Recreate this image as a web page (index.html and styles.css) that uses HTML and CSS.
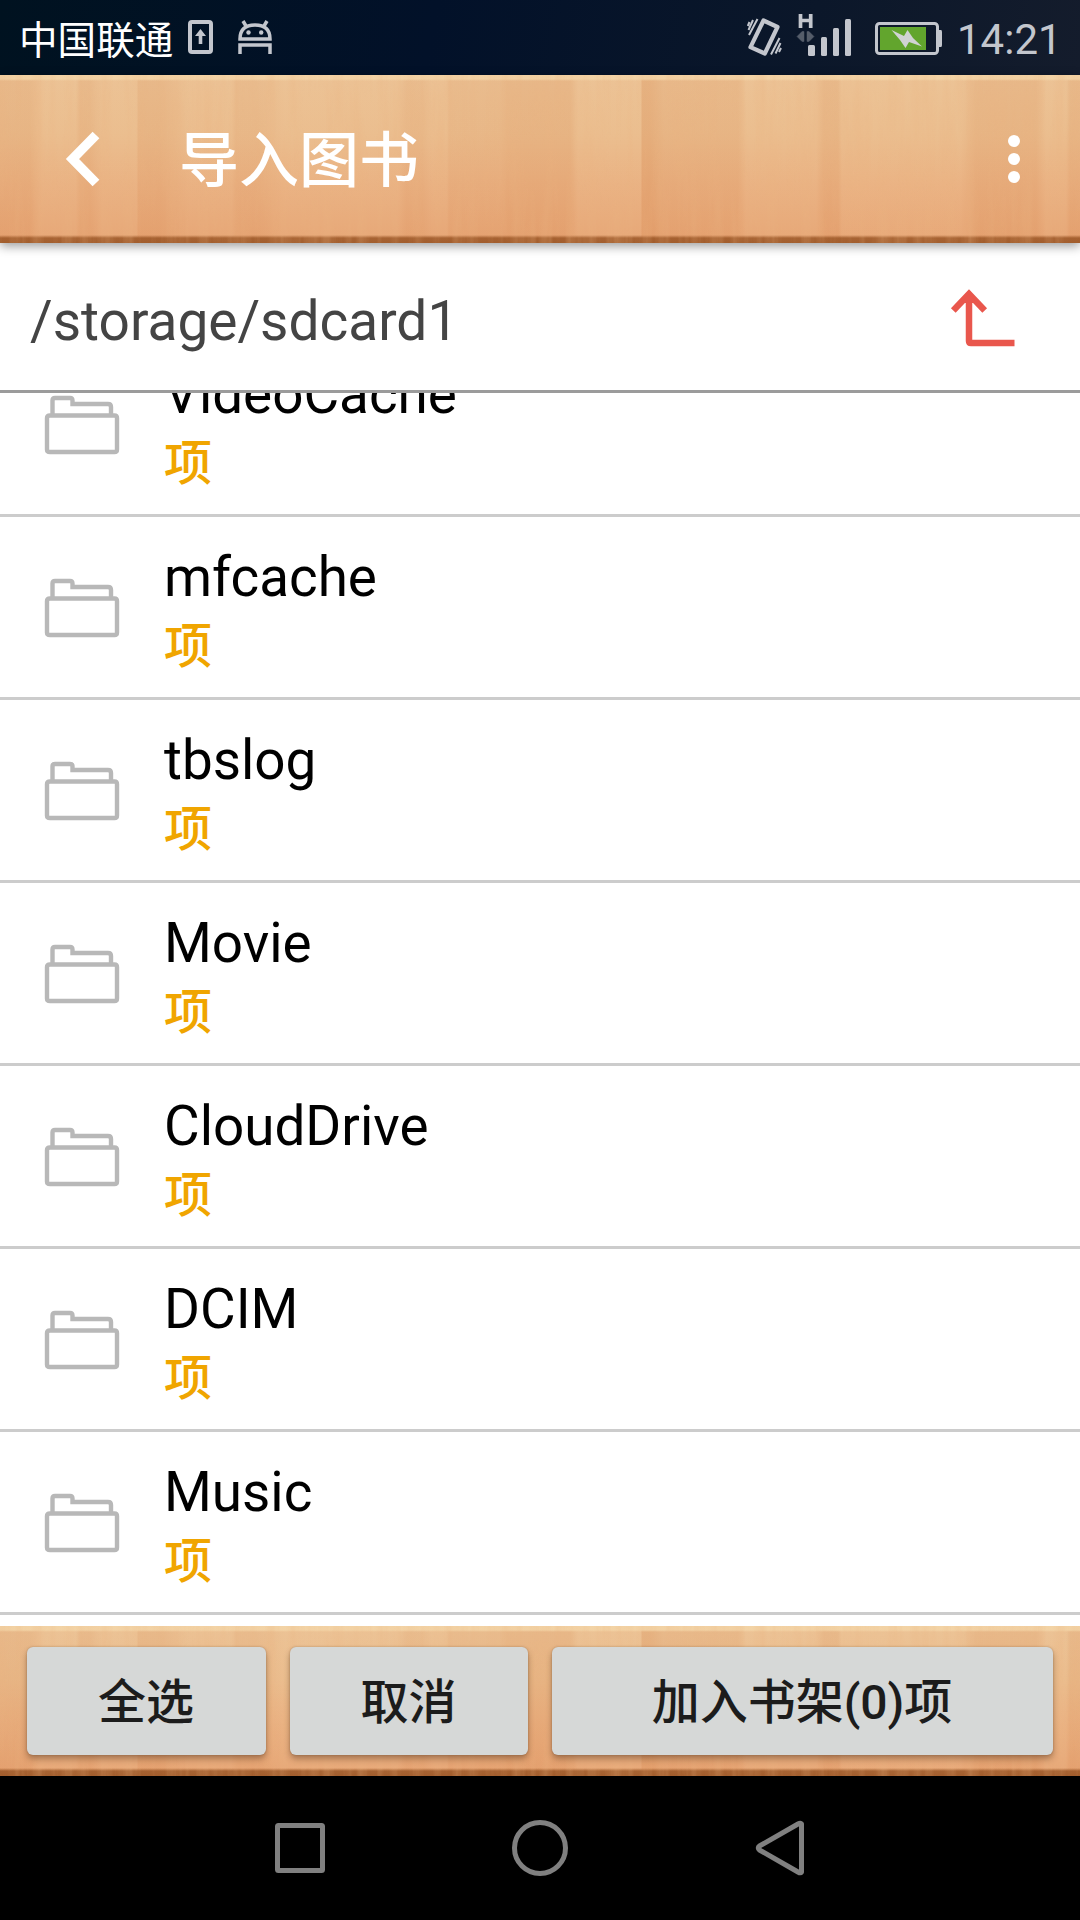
FILE: index.html
```html
<!DOCTYPE html>
<html lang="zh-CN">
<head>
<meta charset="utf-8">
<title>导入图书</title>
<link rel="stylesheet" href="styles.css">
</head>
<body>
<svg class="defs" width="0" height="0" aria-hidden="true">
  <filter id="grain" x="0" y="0" width="100%" height="100%">
    <feTurbulence type="fractalNoise" baseFrequency="0.09 0.008" numOctaves="4" seed="4"/>
    <feColorMatrix values="0 0 0 0 .82  0 0 0 0 .45  0 0 0 0 .22  1.3 0 0 0 -.48"/>
  </filter>
  <symbol id="folder" viewBox="0 0 76 60">
    <path d="M8.500 19V5.500Q8.500 3 11 3H26Q28.500 3 28.500 5.500V9H64Q67 9 67 12V19M6 20.500H70.500Q73 20.500 73 23V54.500Q73 57 70.500 57H6Q3 57 3 54.500V23Q3 20.500 6 20.500Z" fill="none" stroke="#b8b8b8" stroke-width="4.400"/>
  </symbol>
</svg>
<div class="screen">
  <div class="status">
    <span class="carrier">中国联通</span>
    <svg class="status-left" width="84" height="34" viewBox="188 20 84 34" fill="none" stroke="#c3c6cd" stroke-width="4">
      <rect x="190" y="22" width="21" height="30" rx="2"/>
      <path d="M200.500 29L206 36H202.300V44H198.700V36H195Z" fill="#c3c6cd" stroke="none"/>
      <path d="M240 39Q240 25 255 25Q270 25 270 39ZM246 26L243 21M264 26L267 21M240 54V45H270V54" stroke-width="3.500"/>
      <circle cx="248.500" cy="32.500" r="2.200" fill="#c3c6cd" stroke="none"/>
      <circle cx="261.200" cy="32.500" r="2.200" fill="#c3c6cd" stroke="none"/>
    </svg>
    <svg class="status-right" width="197" height="50" viewBox="746 10 197 50" fill="none" stroke="#c3c6cd">
      <path d="M763.500 20.500L777.500 27L764.800 53.500L750.500 47.200Z" stroke-width="4.200" stroke-linejoin="round"/>
      <path d="M757.500 19L749 35M753 20L748.500 30M749.500 22L747.800 26M779.500 38L771 54.500M780.500 43L775.500 53.500M781 48L779 52" stroke-width="2"/>
      <path d="M800.500 14V28M810.700 14V28M800 20.500H811" stroke-width="3.700"/>
      <path d="M797 36.500L802 31.500H804V41.500H802ZM814 36.500L809 31.500H807V41.500H809Z" fill="#555d6a" stroke="#555d6a" stroke-width=".5"/>
      <g fill="#c3c6cd" stroke="none">
        <rect x="808" y="45" width="7" height="11" rx="1.500"/><rect x="821" y="37" width="6" height="19" rx="1.500"/><rect x="833" y="28" width="6" height="28" rx="1.500"/><rect x="845" y="19" width="6" height="37" rx="1.500"/>
      </g>
      <rect x="876.500" y="23.500" width="61" height="30" rx="3" stroke-width="3"/>
      <path d="M939 30H941Q942 30 942 32V45Q942 47 941 47H939Z" fill="#c3c6cd" stroke="none"/>
      <rect x="880" y="27" width="46" height="23" fill="#62a52d" stroke="none"/>
      <path d="M891.500 30L904 36L907.500 30L913 38L922 46.500L909 42L905.500 48L900 40Z" fill="#d0d3d3" stroke="none"/>
    </svg>
    <span class="time">14:21</span>
  </div>
  <header class="header wood">
    <svg class="grain" width="100%" height="100%"><rect width="100%" height="100%" filter="url(#grain)"/></svg>
    <svg class="back" width="36" height="56" viewBox="0 0 36 56"><path d="M31 4L7.500 28L31 52" fill="none" stroke="#fff" stroke-width="9.500"/></svg>
    <h1 class="title">导入图书</h1>
    <svg class="more" width="12" height="48" viewBox="0 0 12 48" fill="#fff"><circle cx="6" cy="6" r="6"/><circle cx="6" cy="24" r="6"/><circle cx="6" cy="42" r="6"/></svg>
  </header>
  <div class="path">
    <span class="path-text">/storage/sdcard1</span>
    <svg width="66" height="60" viewBox="950 288 66 60" fill="none" stroke="#e9574d" stroke-width="6.500"><path d="M1014.500 343H971Q969 343 969 341V294M953.300 310.500L969 294L984.700 310.500"/><path d="M969 294L961 303H977Z" fill="#e9574d" stroke="none"/></svg>
  </div>
  <main class="list">
    <div class="rows">
      <div class="row"><svg class="folder"><use href="#folder"/></svg><div><div class="name">VideoCache</div><div class="count">项</div></div></div>
      <div class="row"><svg class="folder"><use href="#folder"/></svg><div><div class="name">mfcache</div><div class="count">项</div></div></div>
      <div class="row"><svg class="folder"><use href="#folder"/></svg><div><div class="name">tbslog</div><div class="count">项</div></div></div>
      <div class="row"><svg class="folder"><use href="#folder"/></svg><div><div class="name">Movie</div><div class="count">项</div></div></div>
      <div class="row"><svg class="folder"><use href="#folder"/></svg><div><div class="name">CloudDrive</div><div class="count">项</div></div></div>
      <div class="row"><svg class="folder"><use href="#folder"/></svg><div><div class="name">DCIM</div><div class="count">项</div></div></div>
      <div class="row"><svg class="folder"><use href="#folder"/></svg><div><div class="name">Music</div><div class="count">项</div></div></div>
    </div>
  </main>
  <footer class="footer wood">
    <svg class="grain" width="100%" height="100%"><rect width="100%" height="100%" filter="url(#grain)"/></svg>
    <button class="btn">全选</button>
    <button class="btn">取消</button>
    <button class="btn">加入书架(0)项</button>
  </footer>
  <nav class="nav">
    <svg width="530" height="58" viewBox="275 1819 530 58" fill="none" stroke="#808080" stroke-width="5" stroke-linejoin="round">
      <rect x="277.500" y="1825.500" width="45" height="45" rx="1"/>
      <circle cx="540" cy="1848" r="25.500"/>
      <path d="M801.500 1824V1872Q800.500 1873.500 798 1872L759.500 1850Q757 1848 759.500 1846L798 1824Q800.500 1822.500 801.500 1824Z"/>
    </svg>
  </nav>
</div>
</body>
</html>
```
FILE: styles.css
```css
* { box-sizing: border-box; }
body { margin: 0; background: #fff; font-family: Roboto, "Noto Sans CJK SC", sans-serif; }
svg { display: block; flex: none; }
.defs { position: absolute; }
.screen { width: 1080px; height: 1920px; display: flex; flex-direction: column; overflow: hidden; }

.status { height: 75px; flex: none; display: flex; align-items: center; padding: 0 24px 0 19px; background: linear-gradient(100deg, #001220 0%, #021129 40%, #0b172a 75%, #141c2c 100%); }
.carrier { width: 169px; font-size: 38.6px; line-height: 75px; color: #fff; white-space: nowrap; padding-top: 5px; }
.status-left { margin-bottom: 1px; }
.status-right { margin-left: auto; margin-bottom: 5px; }
.time { width: 113px; padding: 4px 0 0 14px; font-size: 42px; line-height: 71px; color: #c3c6cd; white-space: nowrap; }

.wood {
  position: relative;
  isolation: isolate;
  flex: none;
  display: flex;
  align-items: center;
  background:
    linear-gradient(rgba(244,214,168,.85) 0 4px, rgba(244,214,168,0) 6px, rgba(145,76,28,0) calc(100% - 8px), rgba(145,76,28,.75) calc(100% - 5px), rgba(145,76,28,.8) 100%),
    linear-gradient(90deg,
      rgba(212,128,68,.12) 0 30px, rgba(255,220,170,.06) 42px 76px, rgba(212,128,68,.1) 80px 90px, rgba(255,220,170,.06) 102px 137px,
      rgba(212,128,68,.13) 138px 160px, rgba(255,220,170,.04) 190px 232px, rgba(212,128,68,.08) 236px 258px, rgba(255,220,170,.06) 285px 398px,
      rgba(212,128,68,.07) 406px 422px, rgba(255,220,170,.04) 432px 447px, rgba(212,128,68,.08) 449px 500px, rgba(212,128,68,.14) 508px 570px,
      rgba(255,220,170,.06) 578px 641px, rgba(212,128,68,.24) 642px 650px, rgba(212,128,68,.12) 664px 738px, rgba(255,220,170,.06) 746px 816px,
      rgba(212,128,68,.12) 824px 838px, rgba(255,220,170,.07) 842px 960px, rgba(212,128,68,.13) 976px 1036px, rgba(255,220,170,.06) 1046px 1066px, rgba(212,128,68,.12) 1070px),
    linear-gradient(#ebc194, #eabc8d 35%, #e9b081 65%, #e6a474);
}
.grain { position: absolute; inset: 0; z-index: -1; opacity: .45; }
.header { height: 168px; padding: 0 60px 0 65px; box-shadow: 0 3px 10px rgba(0,0,0,.4); z-index: 1; }
.title { margin: 0 auto 0 78px; padding-top: 5px; font-size: 60px; line-height: 90px; font-weight: 500; color: #fff; }

.path { height: 150px; flex: none; display: flex; align-items: center; justify-content: space-between; padding: 2px 64px 0 30px; border-bottom: 3px solid #9b9b9b; }
.path-text { padding-top: 7px; font-size: 55px; line-height: 64px; color: #444; }

.list { flex: 1; min-height: 0; overflow: hidden; }
.rows { margin-top: -59px; }
.row { height: 183px; display: flex; align-items: flex-start; padding-top: 28px; border-bottom: 3px solid #ccc; }
.folder { width: 76px; height: 60px; margin: 33px 44px 0 44px; }
.name { font-size: 54.8px; line-height: 64px; color: #000; }
.count { padding-top: 2px; font-size: 48px; line-height: 72px; font-weight: 500; color: #f0a500; }

.footer { height: 150px; display: grid; grid-template-columns: 239px 238px 501px; column-gap: 24px; align-content: center; padding: 0 27px; }
.btn { height: 108px; border: 0; border-radius: 6px; padding: 3px 1px 0 0; background: #d6d8d7; box-shadow: 0 4px 6px rgba(70,40,20,.4), 0 0 2px rgba(70,40,20,.3); font: 500 48px/72px Roboto, "Noto Sans CJK SC", sans-serif; color: #1c1c1c; }
.nav { flex: 0 0 144px; display: flex; align-items: center; justify-content: center; background: #000; }
```
